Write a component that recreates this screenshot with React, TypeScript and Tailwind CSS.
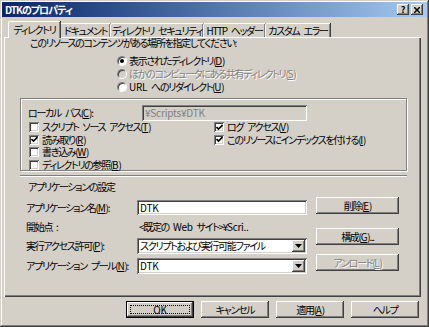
import React from 'react';

const raised =
  'shadow-[inset_-1px_-1px_#404040,inset_1px_1px_#ffffff,inset_-2px_-2px_#808080,inset_2px_2px_#d4d0c8]';
const sunken =
  'shadow-[inset_1px_1px_#808080,inset_-1px_-1px_#ffffff,inset_2px_2px_#404040,inset_-2px_-2px_#d4d0c8]';
const disabledText = 'text-[#808080] [text-shadow:1px_1px_#ffffff]';

const U = ({ children }: { children: React.ReactNode }) => (
  <u className="underline-offset-[1px] tracking-[-0.2px]">{children}</u>
);

const Radio = ({ checked, disabled, children }: { checked?: boolean; disabled?: boolean; children: React.ReactNode }) => (
  <div className="h-[13px] flex items-center gap-[2px] whitespace-nowrap">
    <span
      className={`w-[10px] h-[10px] rounded-full border border-[#808080] border-r-white border-b-white flex items-center justify-center shadow-[inset_1px_1px_#404040] ${
        disabled ? 'bg-[#d4d0c8]' : 'bg-white'
      }`}>
      {checked && <span className="w-[4px] h-[4px] rounded-full bg-black" />}
    </span>
    <span className={disabled ? disabledText : ''}>{children}</span>
  </div>
);

const Check = ({ checked, children }: { checked?: boolean; children: React.ReactNode }) => (
  <div className="h-[12.5px] flex items-center gap-[3px] whitespace-nowrap">
    <span className={`w-[10px] h-[10px] bg-white flex items-center justify-center ${sunken}`}>
      {checked && (
        <svg width="7" height="7" viewBox="0 0 7 7">
          <path d="M0.5 3 L2.5 5 L6.5 1" stroke="#000" strokeWidth="1.6" fill="none" />
        </svg>
      )}
    </span>
    <span>{children}</span>
  </div>
);

const Button = ({ children, disabled, className = '' }: { children: React.ReactNode; disabled?: boolean; className?: string }) => (
  <div className={`h-[17px] bg-[#d4d0c8] flex items-center justify-center whitespace-nowrap ${raised} ${className}`}>
    <span className={disabled ? disabledText : ''}>{children}</span>
  </div>
);

const Select = ({ value, latin }: { value: string; latin?: boolean }) => (
  <div className={`w-[170px] h-[16px] bg-white flex items-center p-[2px] ${sunken}`}>
    <span className={`flex-1 pl-[1px] whitespace-nowrap ${latin ? 'tracking-[-0.2px]' : ''}`}>{value}</span>
    <span className={`w-[13px] h-[12px] bg-[#d4d0c8] flex items-center justify-center ${raised}`}>
      <svg width="7" height="4" viewBox="0 0 7 4">
        <path d="M0 0 H7 L3.5 4 Z" fill="#000" />
      </svg>
    </span>
  </div>
);

const tabs = [
  { label: 'ドキュメント', w: 'w-[50px]' },
  { label: 'ディレクトリ セキュリティ', w: 'w-[93px]' },
  { label: 'HTTP ヘッダー', w: 'w-[62px]' },
  { label: 'カスタム エラー', w: 'w-[65px]' },
];

const App = () => {
  return (
    <div className="w-[429px] h-[327px] bg-[#d4d0c8] p-[2px] flex flex-col text-[10px] leading-[12px] text-black font-['Noto_Sans_CJK_JP',sans-serif] [font-feature-settings:'palt'] tracking-[-1.3px] [word-spacing:3px] shadow-[inset_-1px_-1px_#404040,inset_1px_1px_#d4d0c8,inset_-2px_-2px_#808080,inset_2px_2px_#ffffff]">
      {/* title bar */}
      <div className="h-[15px] flex items-center bg-gradient-to-r from-[#0a246a] to-[#a6caf0] pl-[3px] pr-[4px]">
        <span className="text-white font-bold text-[10px] tracking-[-1px] flex-1">DTKのプロパティ</span>
        <div className="flex gap-[2px]">
          <div className={`w-[12px] h-[11px] bg-[#d4d0c8] flex items-center justify-center text-[9px] font-bold leading-none tracking-normal ${raised}`}>
            ?
          </div>
          <div className={`w-[12px] h-[11px] bg-[#d4d0c8] flex items-center justify-center ${raised}`}>
            <svg width="6" height="6" viewBox="0 0 6 6">
              <path d="M0 0 L6 6 M6 0 L0 6" stroke="#000" strokeWidth="1.5" />
            </svg>
          </div>
        </div>
      </div>

      {/* tabs */}
      <div className="h-[16px] mt-[4px] flex items-end pl-[6px]">
        <div className="w-[52px] h-[17px] -mb-[1px] relative z-10 bg-[#d4d0c8] border-l border-t border-white rounded-tl-[2px] shadow-[inset_-1px_0_#808080,1px_0_#404040] flex items-center justify-center whitespace-nowrap pb-[1px]">
          ディレクトリ
        </div>
        {tabs.map((t) => (
          <div
            key={t.label}
            className={`${t.w} h-[14px] border-l border-t border-white rounded-tl-[2px] shadow-[inset_-1px_0_#808080,1px_0_#404040] flex items-center justify-center whitespace-nowrap`}>
            {t.label}
          </div>
        ))}
      </div>

      {/* panel */}
      <div className="ml-[2px] w-[417px] h-[260px] flex flex-col shadow-[inset_1px_1px_#ffffff,inset_-1px_-1px_#404040,inset_-2px_-2px_#808080]">
        <p className="pl-[26px] h-[12px] whitespace-nowrap">このリソースのコンテンツがある場所を指定してください:</p>
        <div className="mt-[5px] pl-[113px] flex flex-col">
          <Radio checked>
            表示されたディレクトリ(<U>D</U>)
          </Radio>
          <Radio disabled>
            ほかのコンピュータにある共有ディレクトリ(<U>S</U>)
          </Radio>
          <Radio>
            <span className="tracking-[-0.3px]">URL</span> へのリダイレクト(<U>U</U>)
          </Radio>
        </div>

        <div className="mt-[5px] ml-[16px] w-[387px] h-[73px] border border-[#808080] shadow-[1px_1px_#ffffff,inset_1px_1px_#ffffff] flex flex-col">
          <div className="mt-[6px] pl-[7px] flex items-center">
            <span className="w-[114px] whitespace-nowrap">
              ローカル パス(<U>C</U>):
            </span>
            <div className={`w-[165px] h-[16px] bg-[#d4d0c8] flex items-center pl-[3px] text-[#808080] tracking-[-0.2px] ${sunken}`}>
              ¥Scripts¥DTK
            </div>
          </div>
          <div className="flex">
            <div className="w-[193px] pl-[8px] flex flex-col">
              <Check>
                スクリプト ソース アクセス(<U>T</U>)
              </Check>
              <Check checked>
                読み取り(<U>R</U>)
              </Check>
              <Check>
                書き込み(<U>W</U>)
              </Check>
              <Check>
                ディレクトリの参照(<U>B</U>)
              </Check>
            </div>
            <div className="flex flex-col">
              <Check checked>
                ログ アクセス(<U>V</U>)
              </Check>
              <Check checked>
                このリソースにインデックスを付ける(<U>I</U>)
              </Check>
            </div>
          </div>
        </div>

        <div className="mt-[4px] ml-[16px] w-[387px] h-[2px] border-t border-t-[#808080] border-b border-b-white" />

        <p className="mt-[4px] pl-[24px] h-[12px]">アプリケーションの設定</p>

        <div className="flex">
          <div className="pl-[22px] flex flex-col">
            <div className="mt-[7px] h-[15px] flex items-center">
              <span className="w-[111px] whitespace-nowrap">
                アプリケーション名(<U>M</U>):
              </span>
              <div className={`w-[170px] h-[15px] bg-white flex items-center pl-[3px] tracking-[-0.2px] ${sunken}`}>DTK</div>
            </div>
            <div className="mt-[6px] h-[12px] flex items-center">
              <span className="w-[111px] whitespace-nowrap">開始点 :</span>
              <span className="pl-[2px] whitespace-nowrap">
                &lt;既定の <span className="tracking-[-0.3px]">Web</span> サイト&gt;¥<span className="tracking-[-0.3px]">Scri..</span>
              </span>
            </div>
            <div className="mt-[5px] h-[16px] flex items-center">
              <span className="w-[111px] whitespace-nowrap">
                実行アクセス許可(<U>P</U>):
              </span>
              <Select value="スクリプトおよび実行可能ファイル" />
            </div>
            <div className="mt-[4px] h-[16px] flex items-center">
              <span className="w-[111px] whitespace-nowrap">
                アプリケーション プール(<U>N</U>):
              </span>
              <Select value="DTK" latin />
            </div>
          </div>
          <div className="ml-[9px] flex flex-col">
            <Button className="mt-[4px] w-[83px]">
              削除(<U>E</U>)
            </Button>
            <Button className="mt-[14px] w-[83px]">
              構成(<U>G</U>)...
            </Button>
            <Button disabled className="mt-[9px] w-[83px]">
              アンロード(<U>L</U>)
            </Button>
          </div>
        </div>
      </div>

      {/* bottom buttons */}
      <div className="mt-[4px] ml-[124px] flex gap-[7px]">
        <div className="w-[68px] h-[17px] border border-black">
          <div className={`w-full h-full p-[3px] ${raised}`}>
            <div className="w-full h-full border border-dotted border-black flex items-center justify-center tracking-[-0.2px]">
              OK
            </div>
          </div>
        </div>
        <Button className="w-[68px]">キャンセル</Button>
        <Button className="w-[68px]">
          適用(<U>A</U>)
        </Button>
        <Button className="w-[68px]">ヘルプ</Button>
      </div>
    </div>
  );
};

export default App;
